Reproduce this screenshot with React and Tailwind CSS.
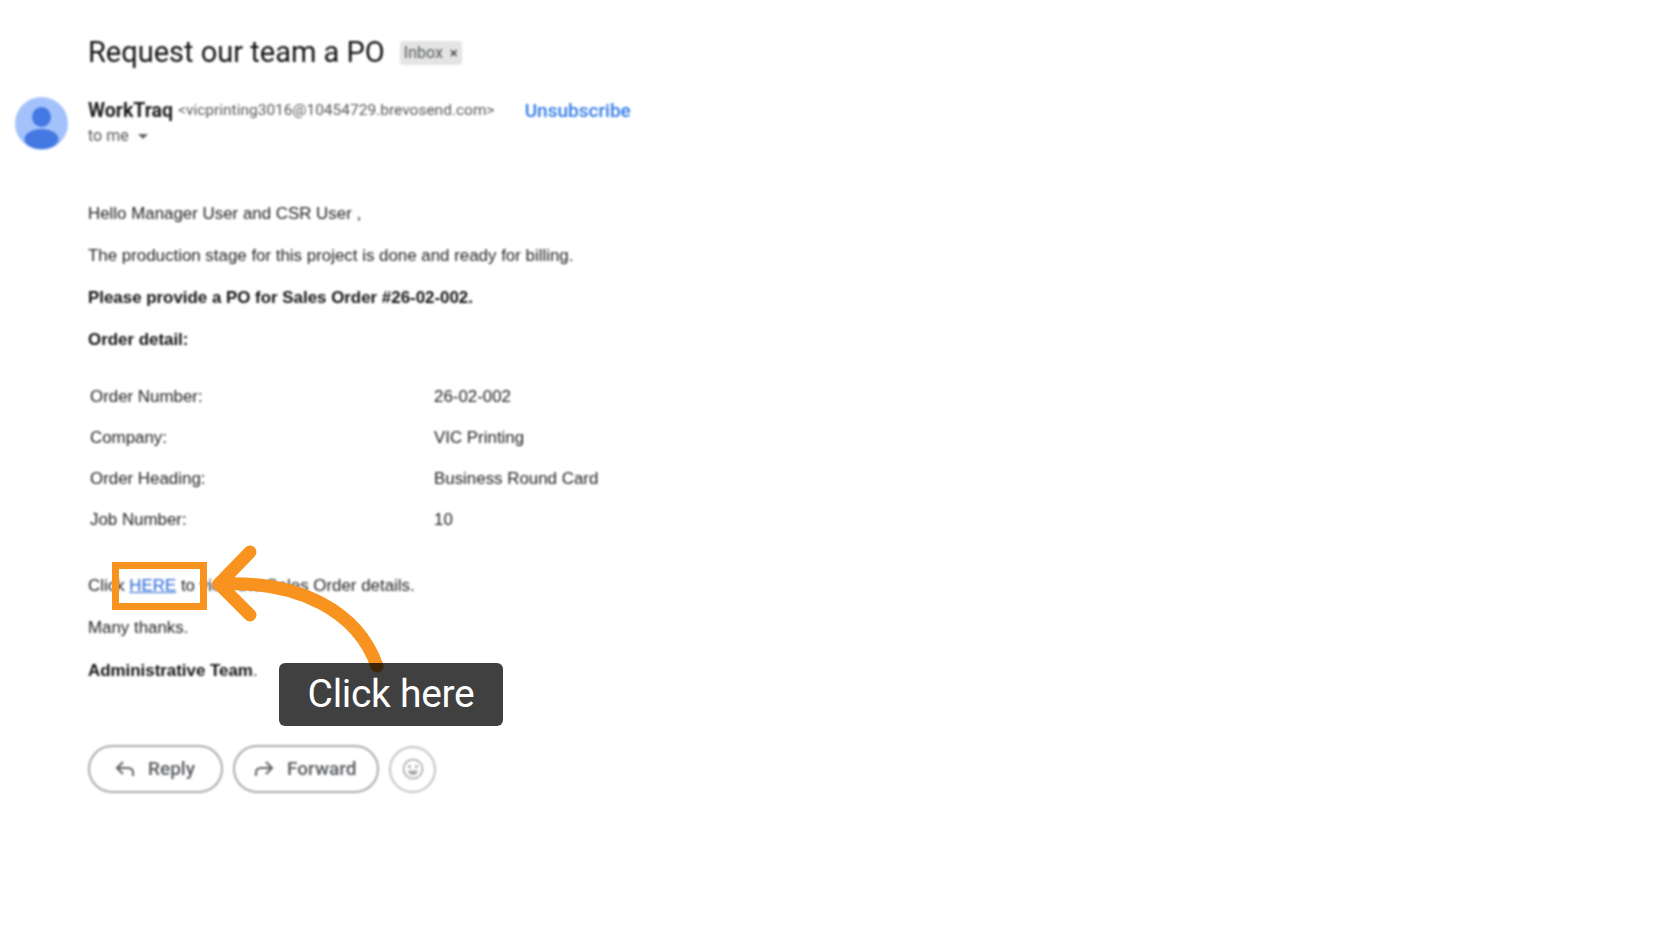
import React from "react";

const orderRows = [
  ["Order Number:", "26-02-002"],
  ["Company:", "VIC Printing"],
  ["Order Heading:", "Business Round Card"],
  ["Job Number:", "10"],
];

function Avatar() {
  return (
    <svg width="53" height="53" viewBox="0 0 53 53" className="shrink-0 -mt-[1px]">
      <defs>
        <clipPath id="avatarClip">
          <circle cx="26.5" cy="26.5" r="26.5" />
        </clipPath>
      </defs>
      <circle cx="26.5" cy="26.5" r="26.5" fill="#a3c2fb" />
      <g clipPath="url(#avatarClip)">
        <ellipse cx="26.5" cy="20" rx="9.5" ry="10" fill="#4478e2" />
        <ellipse cx="26.5" cy="42" rx="17" ry="10" fill="#4478e2" />
      </g>
    </svg>
  );
}

function ReplyIcon() {
  return (
    <svg width="20" height="20" viewBox="0 0 20 20" fill="none" stroke="#5f6368" strokeWidth="2">
      <path d="M8 3 L2 9 L8 15" />
      <path d="M2 9 H13 C16 9 18 11 18 14 V17" />
    </svg>
  );
}

function ForwardIcon() {
  return (
    <svg width="20" height="20" viewBox="0 0 20 20" fill="none" stroke="#5f6368" strokeWidth="2">
      <path d="M12 3 L18 9 L12 15" />
      <path d="M18 9 H7 C4 9 2 11 2 14 V17" />
    </svg>
  );
}

function SmileIcon() {
  return (
    <svg width="22" height="22" viewBox="0 0 22 22" fill="none">
      <circle cx="11" cy="11" r="9.5" stroke="#a4a6a9" strokeWidth="1.6" />
      <circle cx="7.5" cy="8.5" r="1.5" fill="#a4a6a9" />
      <circle cx="14.5" cy="8.5" r="1.5" fill="#a4a6a9" />
      <path d="M6 12.5 H16 C15.5 15.5 13.5 17 11 17 C8.5 17 6.5 15.5 6 12.5 Z" fill="#a4a6a9" />
    </svg>
  );
}

function PillButton({ icon, label, className }) {
  return (
    <button className={"flex items-center h-[48px] rounded-full border-2 border-[#a8aaac] text-[#55585c] text-[19px] font-medium " + className}>
      {icon}
      <span>{label}</span>
    </button>
  );
}

export default function App() {
  return (
    <div className="relative w-full h-[945px] overflow-hidden bg-white font-['Roboto',sans-serif]">
      <div className="blur-[0.8px] pt-[34px]">
        {/* Subject */}
        <div className="flex items-center gap-[15px] pl-[88px] h-[38px]">
          <h1 className="text-[29px] text-[#111]">Request our team a PO</h1>
          <span className="flex items-center gap-[7px] h-[24px] px-[4px] rounded-[3px] bg-[#e3e4e3] text-[#55585c] text-[16px]">
            Inbox
            <span className="text-[15px] text-[#333]">×</span>
          </span>
        </div>

        {/* Sender */}
        <div className="flex items-start mt-[26px] pl-[15px]">
          <Avatar />
          <div className="ml-[20px]">
            <div className="flex items-center h-[26px]">
              <span className="text-[19.5px] font-bold text-[#1c1c1c]">WorkTraq</span>
              <span className="ml-[5px] text-[15.5px] text-[#55585c]">&lt;vicprinting3016@10454729.brevosend.com&gt;</span>
              <span className="ml-[30px] text-[19px] font-medium text-[#2f7ae8]">Unsubscribe</span>
            </div>
            <div className="flex items-center gap-[9px] h-[24px] text-[16px] text-[#55585c]">
              to me
              <span className="w-0 h-0 border-x-[5px] border-x-transparent border-t-[5px] border-t-[#5f6368]" />
            </div>
          </div>
        </div>

        {/* Message body */}
        <div className="mt-[50px] pl-[88px] font-['Liberation_Sans',sans-serif] text-[16.9px] text-[#222]">
          <p className="h-[42px] leading-[28px]">Hello Manager User and CSR User ,</p>
          <p className="h-[42px] leading-[28px]">The production stage for this project is done and ready for billing.</p>
          <p className="h-[42px] leading-[28px] font-bold text-[#111]">Please provide a PO for Sales Order #26-02-002.</p>
          <p className="h-[42px] leading-[28px] font-bold text-[#111]">Order detail:</p>

          <div className="grid grid-cols-[344px_1fr] auto-rows-[41px] mt-[8px] pl-[2px] items-center">
            {orderRows.map(([name, value]) => (
              <React.Fragment key={name}>
                <span>{name}</span>
                <span>{value}</span>
              </React.Fragment>
            ))}
          </div>

          <p className="mt-[32px] h-[42px] leading-[28px]">
            Click <span className="text-[#2563d6] underline">HERE</span> to view the Sales Order details.
          </p>
          <p className="h-[43px] leading-[28px]">Many thanks.</p>
          <p className="h-[28px] leading-[28px]">
            <span className="font-bold text-[#111]">Administrative Team</span>.
          </p>
        </div>

        {/* Actions */}
        <div className="flex items-center gap-[10px] mt-[60px] pl-[88px]">
          <PillButton icon={<ReplyIcon />} label="Reply" className="w-[135px] pl-[25px] gap-[13px]" />
          <PillButton icon={<ForwardIcon />} label="Forward" className="w-[146px] pl-[19px] gap-[13px]" />
          <button className="flex items-center justify-center w-[47px] h-[47px] rounded-full border-2 border-[#c0c2c4]">
            <SmileIcon />
          </button>
        </div>
      </div>

      {/* Annotation overlay */}
      <div className="absolute left-[112px] top-[562px] w-[95px] h-[48px] border-[7px] border-[#f7931e]" />
      <svg className="absolute left-[205px] top-[540px]" width="190" height="140" viewBox="205 540 190 140" fill="none" stroke="#f7931e" strokeWidth="13" strokeLinecap="round" strokeLinejoin="round">
        <path d="M250 552 L219 584 L250 615" />
        <path d="M219 584 C300 580 358 612 377 666" />
      </svg>
      <div className="absolute left-[279px] top-[663px] flex items-center justify-center w-[224px] h-[63px] rounded-[6px] bg-black/75 text-white text-[39px] tracking-[-0.3px] font-['Roboto',sans-serif]">
        Click here
      </div>
    </div>
  );
}
